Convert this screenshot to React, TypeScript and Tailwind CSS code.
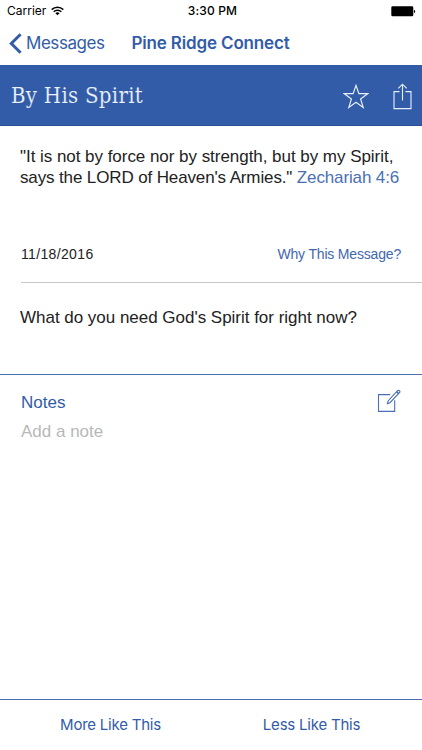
import { ReactNode } from 'react';

const BODY_FONT = "font-['Liberation_Sans',sans-serif]";

/* ── Icons ─────────────────────────────────────────────── */

function WifiIcon() {
  return (
    <svg width="13" height="10" viewBox="0 0 13 10" fill="none" stroke="#000" strokeWidth="1.5">
      <path d="M0.7 3.6a8.2 8.2 0 0 1 11.6 0" />
      <path d="M2.7 5.7a5.4 5.4 0 0 1 7.6 0" />
      <path d="M6.5 9.3 4.4 7.2a3 3 0 0 1 4.2 0Z" fill="#000" stroke="none" />
    </svg>
  );
}

function BatteryIcon() {
  return (
    <svg width="25" height="11" viewBox="0 0 25 11">
      <rect x="0.3" y="0.3" width="22" height="10" rx="1.4" fill="#000" />
      <path d="M23 3.7c1.6.5 1.6 2.9 0 3.4Z" fill="#000" />
    </svg>
  );
}

function BackIcon() {
  return (
    <svg width="13" height="21" viewBox="0 0 13 21" fill="none" stroke="#325ca8" strokeWidth="3">
      <path d="M11.6 1.2 2.3 10.5l9.3 9.3" />
    </svg>
  );
}

function StarIcon() {
  return (
    <svg width="26" height="25" viewBox="0 0 26 25" fill="none" stroke="#e6eefb" strokeWidth="1.2">
      <path d="M13 1.4 15.9 9.7H24.6L17.6 14.9 20.2 23.4 13 18.3 5.8 23.4 8.4 14.9 1.4 9.7H10.1Z" />
    </svg>
  );
}

function ShareIcon() {
  return (
    <svg width="19" height="27" viewBox="0 0 19 27" fill="none" stroke="#e6eefb" strokeWidth="1.1">
      <path d="M6.5 8.6H1v17h17v-17h-5.5" />
      <path d="M9.5 17.5V1.2M5.3 5.4l4.2-4.2 4.2 4.2" />
    </svg>
  );
}

function ComposeIcon() {
  return (
    <svg width="24" height="24" viewBox="0 0 24 24" fill="none" stroke="#4a6fb5" strokeWidth="1.1">
      <path d="M13.2 5.6H1.5v16.8h16.2V11.2" />
      <path d="M10.4 14.6l.7-2.6L20.8 1.5c1-.8 2.7.8 1.9 1.9L13 13.7Z" />
      <path d="M19.6 2.7l2 1.9" strokeWidth="1.6" />
    </svg>
  );
}

/* ── Layout pieces ─────────────────────────────────────── */

function FooterButton({ children }: { children: ReactNode }) {
  return (
    <button className="flex-1 text-center text-[15px] tracking-[-0.22px] text-[#325ca8]">{children}</button>
  );
}

export default function App() {
  return (
    <div className="flex h-[750px] w-[422px] flex-col overflow-hidden whitespace-nowrap bg-white font-['Inter',sans-serif]">
      {/* Status bar */}
      <div className="grid h-[22px] grid-cols-3 items-center pl-[7px] pr-1.5 text-[12px] text-black">
        <div className="flex items-center gap-[5px]">
          <span>Carrier</span>
          <WifiIcon />
        </div>
        <span className="pl-0.5 text-center font-medium tracking-[0.15px]">3:30 PM</span>
        <div className="flex justify-end">
          <BatteryIcon />
        </div>
      </div>

      {/* Navigation */}
      <nav className="grid h-[43px] grid-cols-[1fr_auto_1fr] items-center pl-[9px] pr-[9px] text-[17px] text-[#325ca8]">
        <button className="flex items-center gap-1">
          <BackIcon />
          <span className="tracking-[-0.45px]">Messages</span>
        </button>
        <h1 className="pr-px font-semibold tracking-[-0.15px]">Pine Ridge Connect</h1>
      </nav>

      {/* Message title */}
      <header className="flex h-[61px] items-center justify-between border-b border-[#2a4f96] bg-[#325ca8] pl-[11px] pr-[10px]">
        <h2 className="font-['DejaVu_Serif_Condensed','DejaVu_Serif',serif] text-[22px] tracking-[0.28px] text-[#edf3fc] [-webkit-text-stroke:0.15px_#325ca8]">
          By His Spirit
        </h2>
        <div className="flex items-center gap-6 pt-0.5">
          <StarIcon />
          <ShareIcon />
        </div>
      </header>

      <section className={`flex h-[248px] flex-col text-[17px] text-[#222] ${BODY_FONT}`}>
        <p className="pl-5 pt-5 leading-[21px]">
          <span className="tracking-[-0.04px]">"It is not by force nor by strength, but by my Spirit,</span>
          <br />
          <span className="tracking-[-0.13px]">
            says the LORD of Heaven's Armies." <span className="text-[#4a6fb5]">Zechariah 4:6</span>
          </span>
        </p>
        <div className="ml-[21px] mt-auto flex h-14 items-center justify-between border-b border-[#c8c8c8] pr-[21px] text-[14px]">
          <span className="tracking-[0.35px]">11/18/2016</span>
          <button className="tracking-[-0.18px] text-[#4268b0]">Why This Message?</button>
        </div>
        <p className="h-[91px] pl-5 pt-6 leading-[21px] tracking-[-0.02px]">What do you need God's Spirit for right now?</p>
      </section>

      {/* Notes */}
      <section className={`flex-1 border-t border-[#4a6fb5] pl-[21px] pr-[21px] pt-[14px] text-[17px] ${BODY_FONT}`}>
        <div className="flex h-[27px] items-start justify-between">
          <h3 className="pt-[3px] leading-[21px] text-[#325ca8]">Notes</h3>
          <ComposeIcon />
        </div>
        <p className="pt-[5px] leading-[21px] text-[#b8b8b8]">Add a note</p>
      </section>

      <footer className="flex h-[51px] border-t border-[#4a6fb5] px-[10px]">
        <FooterButton>More Like This</FooterButton>
        <FooterButton>Less Like This</FooterButton>
      </footer>
    </div>
  );
}
